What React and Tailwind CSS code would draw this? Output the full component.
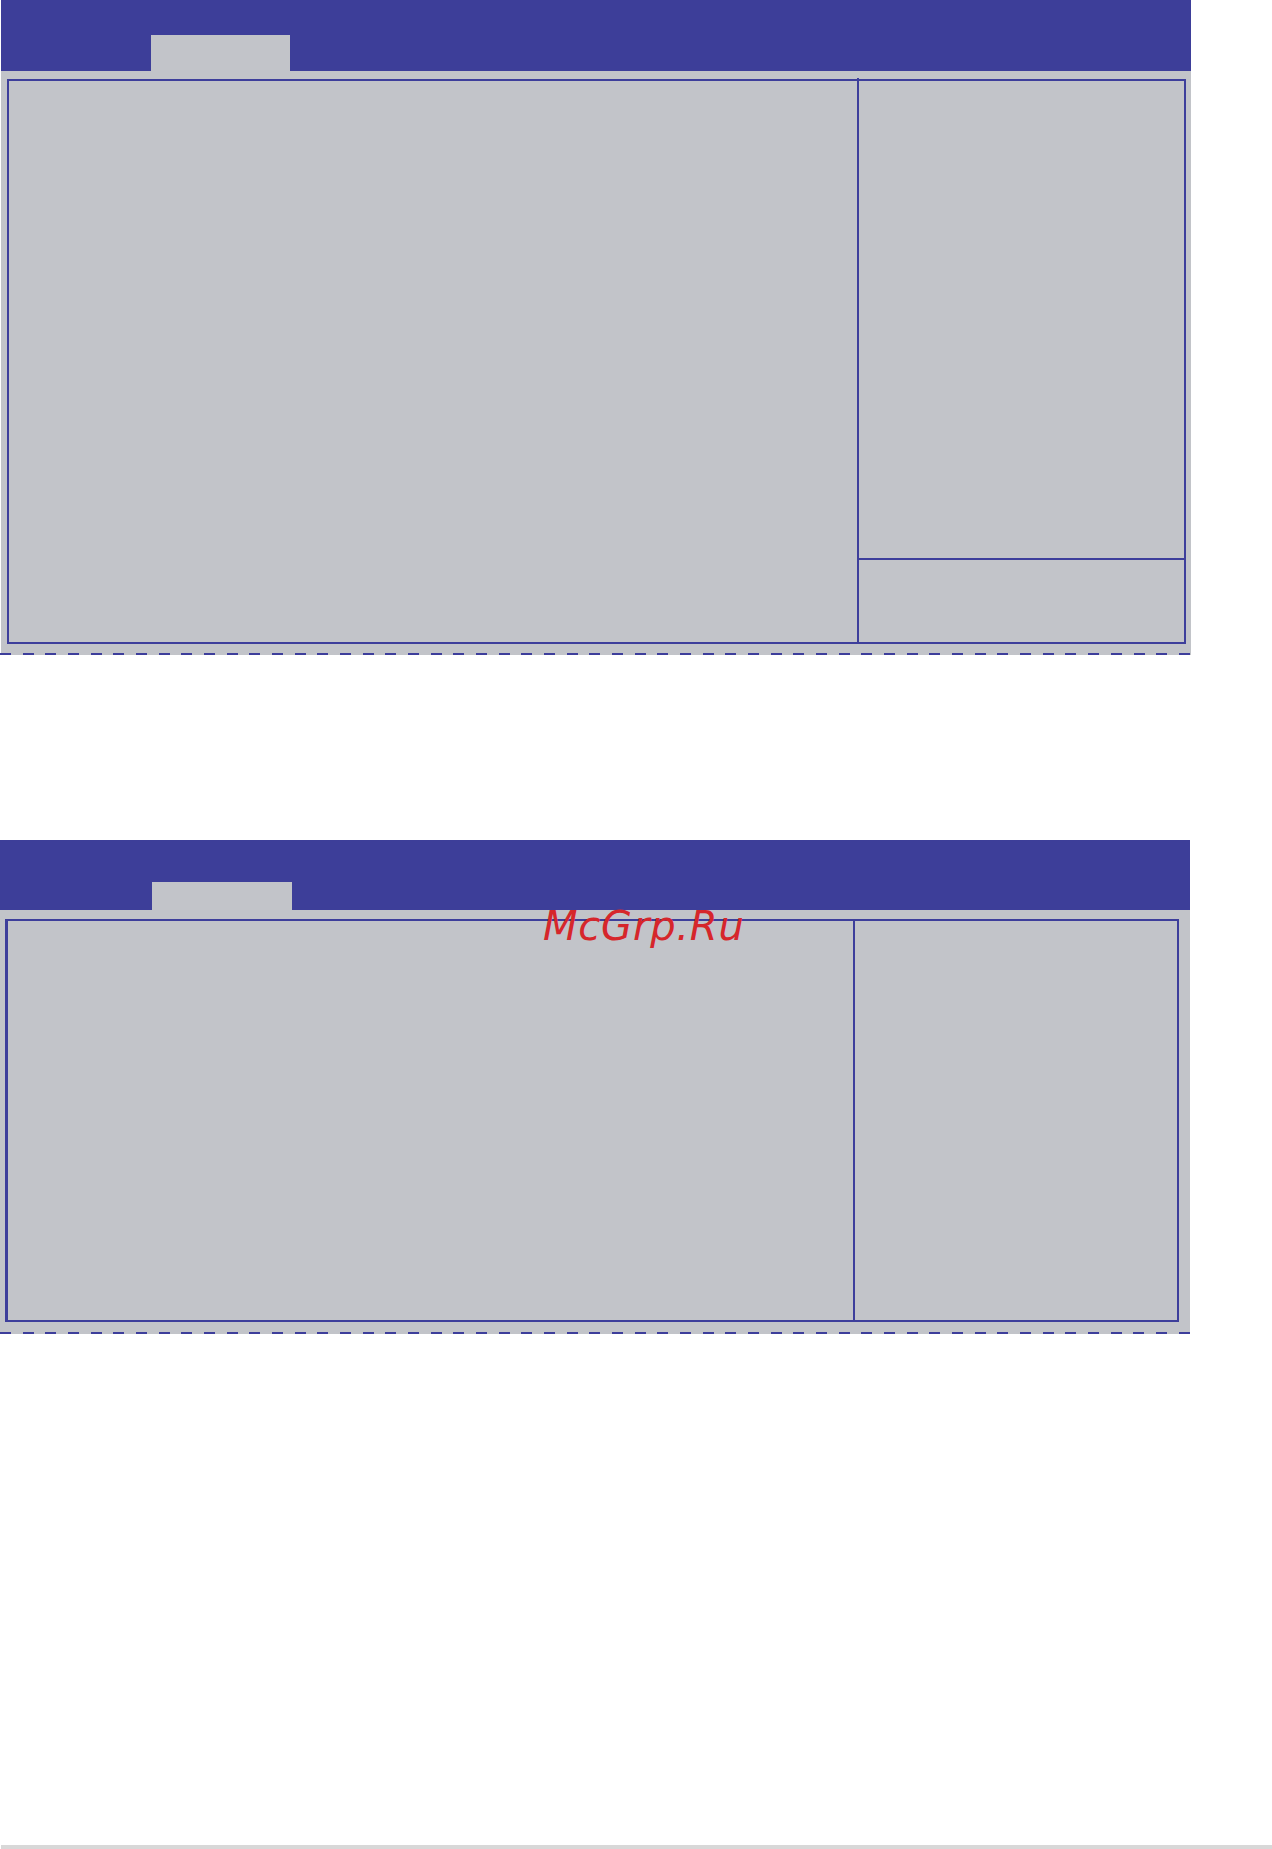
export default function App() {
  const dash =
    "h-[2px] bg-[repeating-linear-gradient(90deg,#3d3e9b_0px,#3d3e9b_11px,transparent_11px,transparent_22.67px)]";

  return (
    <div className="relative flex h-[1849px] w-[1272px] flex-col bg-white font-['DejaVu_Sans',sans-serif]">
      {/* Setup screen, top */}
      <section className="ml-[1px] flex w-[1190px] flex-col">
        <header className="flex h-[71px] items-end bg-[#3d3e99]">
          <div className="ml-[150px] h-[36px] w-[139px] bg-[#c2c4c9]" />
        </header>
        <div className="flex h-[584px] flex-col bg-[#c2c4c9]">
          <div className="ml-[6px] mt-[8px] flex h-[565px] w-[1179px] border-2 border-[#3d3e9b]">
            <div className="w-[848px]" />
            <div className="-mt-[3px] w-[2px] bg-[#3d3e9b]" />
            <div className="flex flex-1 flex-col">
              <div className="h-[477px]" />
              <div className="h-[2px] bg-[#3d3e9b]" />
              <div className="flex-1" />
            </div>
          </div>
          <div className={`-ml-[1px] mt-auto ${dash}`} />
        </div>
      </section>

      {/* Setup screen, bottom */}
      <section className="mt-[185px] flex w-[1190px] flex-col">
        <header className="flex h-[70px] items-end bg-[#3d3e99]">
          <div className="ml-[152px] h-[28px] w-[140px] bg-[#c2c4c9]" />
        </header>
        <div className="flex h-[424px] flex-col bg-[#c2c4c9]">
          <div className="ml-[5px] mt-[9px] flex h-[403px] w-[1174px] border-2 border-l-[3px] border-[#3d3e9b]">
            <div className="w-[845px]" />
            <div className="w-[2px] bg-[#3d3e9b]" />
            <div className="flex-1" />
          </div>
          <div className={`mt-auto ${dash}`} />
        </div>
      </section>

      <div className="ml-[1px] mt-auto h-[4px] w-[1271px] bg-[#d8d8d8]" />

      {/* Watermark */}
      <span className="absolute left-[543px] top-[906px] text-[40px] leading-[40px] italic tracking-[0.8px] text-[#d6262b] font-['DejaVu_Sans',sans-serif]">
        McGrp.Ru
      </span>
    </div>
  );
}
